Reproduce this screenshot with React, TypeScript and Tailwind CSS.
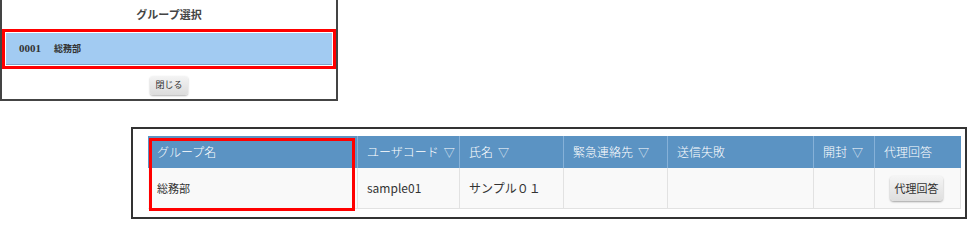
const cols = [
  {label: 'グループ名', w: 'w-[209px]', sort: false},
  {label: 'ユーザコード', w: 'w-[102px]', sort: true},
  {label: '氏名', w: 'w-[104px]', sort: true},
  {label: '緊急連絡先', w: 'w-[104px]', sort: true},
  {label: '送信失敗', w: 'w-[146px]', sort: false},
  {label: '開封', w: 'w-[61px]', sort: true},
  {label: '代理回答', w: 'w-[87px]', sort: false},
];

const cellFont = {fontFamily: '"Noto Sans CJK JP", "Open Sans", sans-serif'};

function GroupDialog() {
  return (
    <div
      className="w-[338px] h-[101px] border-x-2 border-b-2 border-[#444] bg-white flex flex-col"
      style={{fontFamily: '"Noto Sans CJK JP", sans-serif'}}
    >
      <div className="h-[29px] flex items-center justify-center text-[11px] font-bold text-[#444]">
        グループ選択
      </div>
      <div className="h-[40px] border-[3px] border-[#f00] p-px">
        <div className="h-full bg-[#a2cbf2] border-b border-[#7fa3c6] flex items-center pl-[13px] text-[9px] font-bold text-[#333]">
          <span style={{fontFamily: '"Liberation Serif", "Noto Sans CJK JP", serif'}} className="text-[11px]">0001</span>
          <span className="ml-[13px]">総務部</span>
        </div>
      </div>
      <div className="flex-1 flex items-center justify-center pt-[2px]">
        <button className="h-[19px] px-[5px] rounded-[3px] bg-gradient-to-b from-[#f4f4f4] to-[#dcdcdc] shadow-[0_1px_2px_rgba(0,0,0,0.3)] text-[9px] text-[#333]">
          閉じる
        </button>
      </div>
    </div>
  );
}

function MemberTable() {
  return (
    <div className="ml-[131px] mt-[26px] w-[836px] h-[92px] border-2 border-[#333] bg-white pl-[15px] pt-[7px]">
      <div className="relative w-[813px]" style={cellFont}>
        <div className="flex h-[32px] bg-[#5b93c3] text-white text-[12px] font-light">
          {cols.map((c, i) => (
            <div
              key={c.label}
              className={`${c.w} flex items-center pl-[9px] ${i > 0 ? 'border-l border-[#86b1d8]' : ''}`}
            >
              {c.label}
              {c.sort && <span className="ml-[5px] text-[11px]">▽</span>}
            </div>
          ))}
        </div>
        <div className="flex h-[41px] bg-[#f9f9f9] text-[12px] text-[#333] border-b border-[#e2e2e2]">
          <div className="w-[209px] flex items-center pl-[9px] text-[11px]">総務部</div>
          <div className="w-[102px] flex items-center pl-[9px] border-l border-[#e2e2e2]">sample01</div>
          <div className="w-[104px] flex items-center pl-[9px] border-l border-[#e2e2e2]">サンプル０１</div>
          <div className="w-[104px] border-l border-[#e2e2e2]" />
          <div className="w-[146px] border-l border-[#e2e2e2]" />
          <div className="w-[61px] border-l border-[#e2e2e2]" />
          <div className="w-[87px] flex items-center pl-[15px] border-l border-r border-[#e2e2e2]">
            <button className="w-[53px] h-[25px] rounded-[4px] bg-gradient-to-b from-[#f5f5f5] to-[#dedede] shadow-[0_1px_2px_rgba(0,0,0,0.35)] text-[11px] text-[#333]">
              代理回答
            </button>
          </div>
        </div>
        <div className="absolute left-[1px] top-[2px] w-[206px] h-[73px] border-[3px] border-[#f00]" />
      </div>
    </div>
  );
}

export default function App() {
  return (
    <div className="w-[970px] h-[220px] bg-white overflow-hidden">
      <GroupDialog />
      <MemberTable />
    </div>
  );
}
